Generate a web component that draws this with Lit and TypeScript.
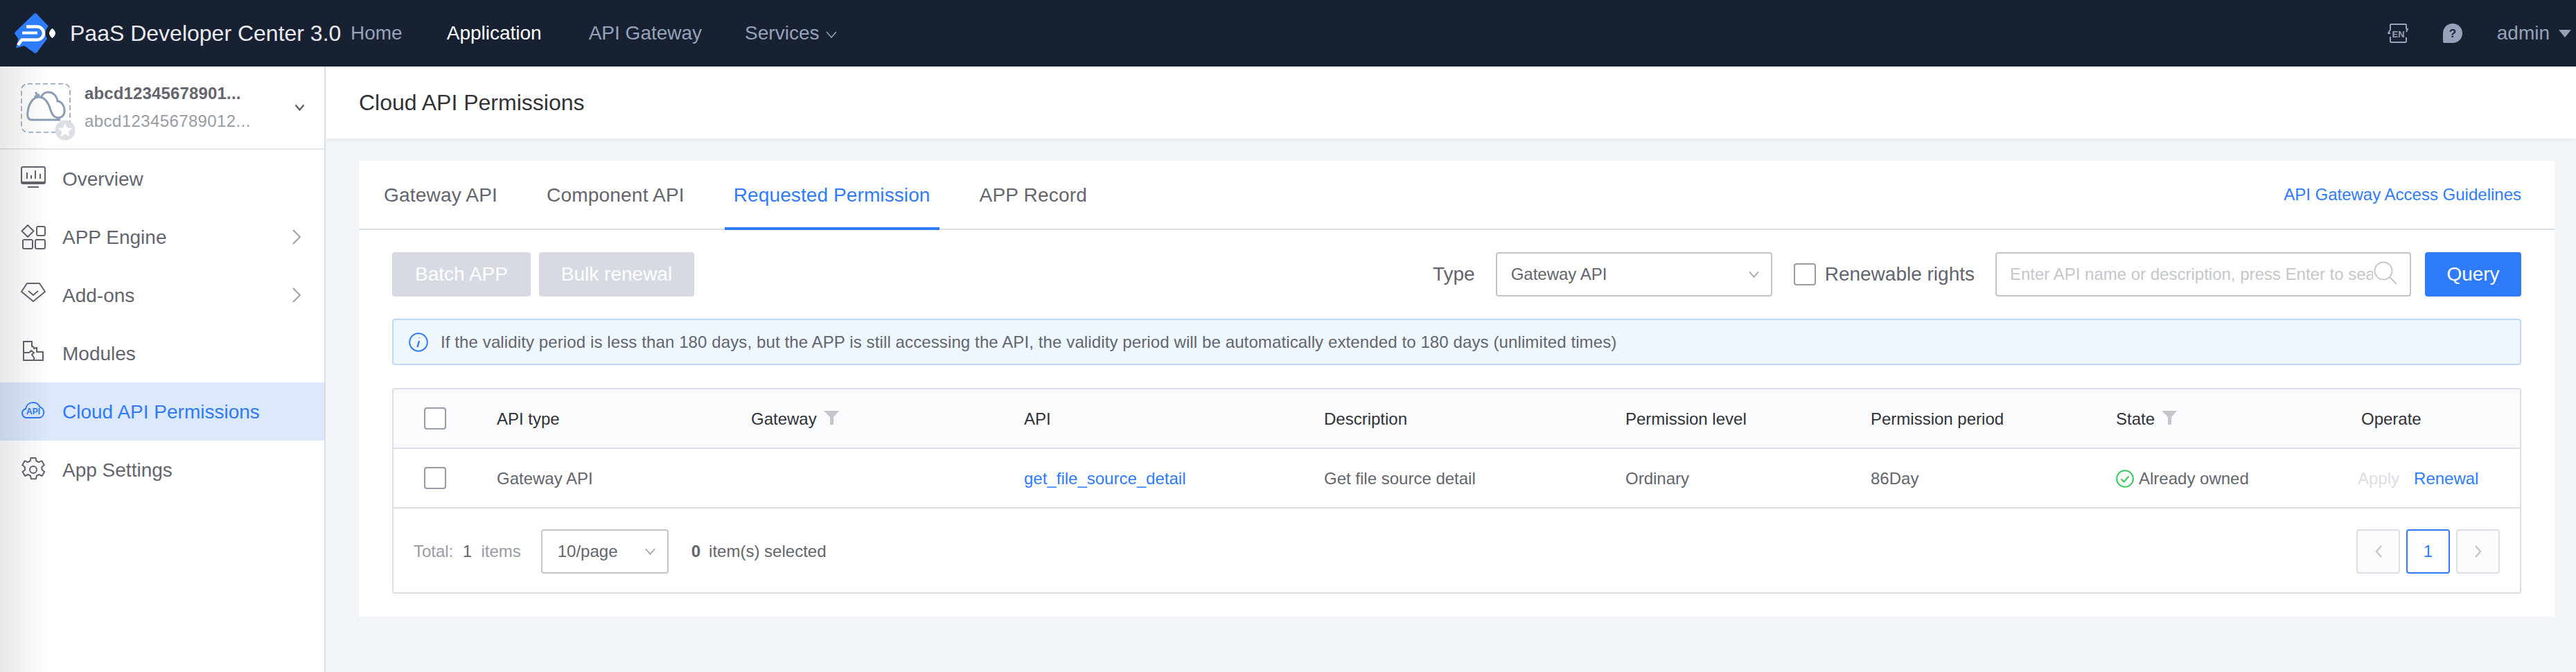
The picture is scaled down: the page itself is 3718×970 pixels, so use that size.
import { LitElement, html, css, svg } from "lit";
import { customElement } from "lit/decorators.js";

const chevronRight = html`<svg class="menu-chev" viewBox="0 0 12 22"><path d="M1 1l10 10L1 21" fill="none" stroke="#979ba5" stroke-width="1.8"/></svg>`;

const menuIcons: Record<string, unknown> = {
  overview: svg`<rect x="1" y="1" width="34" height="22" rx="2" fill="none" stroke="#63656e" stroke-width="2"/><path d="M1 20v3a2 2 0 002 2h30a2 2 0 002-2v-3" fill="none" stroke="#63656e" stroke-width="2"/><path d="M9 9v9M15 13v5M21 6v12M28 11v7M10 30h16" fill="none" stroke="#63656e" stroke-width="2"/>`,
  engine: svg`<path d="M10 1l8.500 8.500L10 18 1.500 9.500z" fill="none" stroke="#63656e" stroke-width="2" stroke-linejoin="round"/><rect x="23" y="3" width="12" height="13" rx="2" fill="none" stroke="#63656e" stroke-width="2"/><rect x="3" y="22" width="14" height="13" rx="2" fill="none" stroke="#63656e" stroke-width="2"/><rect x="21" y="22" width="14" height="13" rx="2" fill="none" stroke="#63656e" stroke-width="2"/>`,
  addons: svg`<path d="M9 1h18l8 12-17 14L1 13z" fill="none" stroke="#63656e" stroke-width="2" stroke-linejoin="round"/><path d="M11 12l7 6 7-6" fill="none" stroke="#63656e" stroke-width="2"/>`,
  modules: svg`<path d="M4 1h12v7a3 3 0 013 3l4-1v6h9v12H4z" fill="none" stroke="#63656e" stroke-width="2"/><path d="M4 17h8l3-3 4 3-3 3 3 4v5" fill="none" stroke="#63656e" stroke-width="2"/>`,
  api: svg`<path d="M9 27a6.500 6.500 0 01-2-12.800C8 9 12 5 18 5c5 0 8 3 9.500 6.500A8 8 0 0127 27z" fill="none" stroke="#2e7bfc" stroke-width="2"/><text x="18" y="22" text-anchor="middle" class="api-t">API</text>`,
  settings: svg`<path d="M14.500 1h7l1 4.500 3.500 1.700 4.300-2 3.500 6-3.600 3 .4 3.800 3.600 3-3.500 6-4.300-2-3.500 1.700-1 4.500h-7l-1-4.500-3.500-1.700-4.300 2-3.500-6 3.600-3-.4-3.800-3.600-3 3.500-6 4.300 2 3.500-1.700z" fill="none" stroke="#63656e" stroke-width="2" stroke-linejoin="round"/><circle cx="18" cy="18" r="5" fill="none" stroke="#63656e" stroke-width="2"/>`,
};

const funnel = html`<svg class="funnel" viewBox="0 0 22 20"><path d="M0 0h22l-8 9v11h-5V9z" fill="#c4c6cc"/></svg>`;
const smallChev = html`<svg class="sel-chev" viewBox="0 0 16 10"><path d="M1 1l7 8 7-8" fill="none" stroke="#979ba5" stroke-width="1.600"/></svg>`;

@customElement("app-root")
export class AppRoot extends LitElement {
  static styles = css`
    :host { display: block; font-family: "Liberation Sans", Arial, sans-serif; color: #63656e; width: 3718px; height: 970px; overflow: hidden; background: #f3f6f9; }
    .topbar { height: 96px; background: #182132; display: flex; align-items: center; }
    .logo { width: 64px; height: 62px; margin-left: 20px; flex: none; }
    .brand { margin-left: 17px; font-size: 32px; color: #eaebf0; white-space: nowrap; width: 405px; }
    .nav { display: flex; font-size: 28px; color: #96a2b9; }
    .nav span { display: flex; align-items: center; margin-right: 64px; }
    .nav .on { color: #fff; margin-right: 68px; }
    .nav .gw { margin-right: 62px; }
    .nav svg { width: 16px; height: 10px; margin-left: 10px; margin-top: 4px; }
    .top-right { margin-left: auto; display: flex; align-items: center; padding-right: 7px; color: #96a2b9; font-size: 28px; }
    .en { width: 30px; height: 28px; margin-right: 49px; }
    .help { width: 30px; height: 30px; margin-right: 49px; }
    .caret { width: 18px; height: 11px; margin-left: 13px; }
    .body { display: flex; height: 874px; }
    .side { width: 468px; border-right: 2px solid #dcdee5; background: #fff; position: relative; flex: none; }
    .side::before { content: ""; position: absolute; inset: 0 auto 0 0; width: 72px; background: linear-gradient(90deg, rgba(0,0,0,.09), rgba(0,0,0,0)); pointer-events: none; }
    .switch { height: 118px; border-bottom: 2px solid #e4e6ea; display: flex; align-items: center; padding-left: 30px; box-sizing: content-box; }
    .app-ic { width: 72px; height: 72px; flex: none; position: relative; margin-right: 20px; margin-top: 2px; }
    .app-ic svg { display: block; width: 100%; height: 100%; overflow: visible; }
    .app-txt { width: 303px; flex: none; }
    .a1 { font-size: 24px; font-weight: 700; color: #63656e; line-height: 28px; margin-bottom: 12px; white-space: nowrap; letter-spacing: .15px; }
    .a2 { font-size: 24px; color: #979ba5; line-height: 28px; white-space: nowrap; letter-spacing: .4px; }
    .sw-chev { width: 15px; height: 10px; }
    .item { height: 84px; display: flex; align-items: center; padding-left: 30px; font-size: 28px; color: #63656e; }
    .item span { padding-top: 2px; }
    .item .ic { width: 36px; height: 36px; margin-right: 24px; flex: none; overflow: visible; }
    .item.active { background: #dbe8fe; color: #2e7bfc; }
    .api-t { font: 700 12px "Liberation Sans", Arial, sans-serif; fill: #2e7bfc; }
    .menu-chev { width: 12px; height: 22px; margin-left: auto; margin-right: 34px; }
    .main { flex: 1; min-width: 0; }
    .head { height: 104px; background: #fff; display: flex; align-items: center; padding-left: 48px; font-size: 32px; color: #313238; box-shadow: 0 3px 6px rgba(0,0,0,.05); }
    .card { margin: 32px 31px 0 48px; height: 658px; background: #fff; display: flex; flex-direction: column; }
    .tabs { height: 100px; box-sizing: border-box; border-bottom: 2px solid #dcdee5; display: flex; align-items: stretch; padding: 0 48px 0 23px; }
    .tab { padding: 0 13px; margin-right: 45px; font-size: 28px; letter-spacing: .2px; display: flex; align-items: center; color: #63656e; white-space: nowrap; margin-bottom: -2px; border-top: 4px solid transparent; border-bottom: 4px solid transparent; box-sizing: border-box; }
    .tab.on { color: #2e7bfc; border-bottom-color: #2e7bfc; letter-spacing: .1px; }
    .guide { margin-left: auto; align-self: center; font-size: 24px; color: #2e7bfc; }
    .content { padding: 32px 48px 0; }
    .toolbar { display: flex; align-items: center; height: 64px; }
    .btn { height: 64px; border-radius: 4px; background: #d7dae2; color: #fff; font-size: 28px; display: flex; align-items: center; justify-content: center; }
    .b1 { width: 200px; margin-right: 12px; }
    .b2 { width: 224px; }
    .type { margin-left: auto; font-size: 28px; margin-right: 30px; }
    .select { border: 2px solid #c4c6cc; border-radius: 4px; background: #fff; height: 64px; box-sizing: border-box; display: flex; align-items: center; font-size: 24px; }
    .sel-chev { width: 15px; height: 10px; margin-left: auto; }
    .s1 { width: 399px; padding: 0 17px 0 20px; margin-right: 31px; }
    .cb { width: 32px; height: 32px; box-sizing: border-box; border: 2px solid #979ba5; border-radius: 4px; background: #fff; flex: none; }
    .renew { font-size: 28px; margin-left: 13px; margin-right: 30px; }
    .search { width: 600px; height: 64px; box-sizing: border-box; border: 2px solid #c4c6cc; border-radius: 4px; display: flex; align-items: center; padding-left: 19px; padding-right: 17px; margin-right: 20px; }
    .ph { font-size: 24px; color: #c4c6cc; white-space: nowrap; overflow: hidden; flex: 1; min-width: 0; }
    .search svg { width: 36px; height: 36px; flex: none; margin-top: -4px; }
    .query { width: 139px; height: 64px; border-radius: 4px; background: #2e7bfc; color: #fff; font-size: 28px; display: flex; align-items: center; justify-content: center; }
    .alert { margin-top: 32px; height: 67px; box-sizing: border-box; background: #eef6fe; border: 2px solid #c0d8f8; border-radius: 4px; display: flex; align-items: center; padding-left: 22px; font-size: 24px; letter-spacing: .11px; }
    .alert svg { width: 28px; height: 28px; margin-right: 18px; flex: none; }
    .table { margin-top: 33px; border: 2px solid #dcdee5; border-radius: 4px; font-size: 24px; height: 297px; box-sizing: border-box; }
    .row { display: grid; grid-template-columns: 149px 367px 394px 433px 435px 354px 354px 354px 1fr; height: 86px; box-sizing: border-box; border-bottom: 2px solid #dcdee5; align-items: center; }
    .row > div:not(.c0) { padding-top: 2px; }
    .row.th { background: #fafbfd; color: #313238; }
    .row .c0 { padding-left: 44px; }
    .row .cb { display: block; }
    .fcell { display: flex; align-items: center; }
    .funnel { width: 22px; height: 20px; margin-left: 10px; margin-top: -4px; }
    .link { color: #2e7bfc; }
    .state { display: flex; align-items: center; }
    .state svg { width: 26px; height: 26px; margin-right: 7px; }
    .op { display: flex; margin-left: -5px; white-space: nowrap; }
    .apply { color: #dcdee5; margin-right: 21px; }
    .foot { display: flex; align-items: center; height: 121px; box-sizing: border-box; padding: 2px 29px 0; }
    .total { color: #979ba5; white-space: pre; }
    .total b { font-weight: 400; color: #63656e; }
    .s2 { width: 184px; padding: 0 17px 0 22px; margin-left: 29px; margin-right: 33px; }
    .sel b { font-weight: 700; color: #63656e; margin-right: 12px; }
    .pager { margin-left: auto; display: flex; gap: 9px; }
    .pg { width: 63px; height: 64px; box-sizing: border-box; border: 2px solid #dcdee5; border-radius: 4px; background: #fafbfd; display: flex; align-items: center; justify-content: center; }
    .pg svg { width: 12px; height: 20px; }
    .pg.cur { background: #fff; border-color: #2e7bfc; color: #2e7bfc; }
  `;

  private renderTable() {
    return html`<div class="table">
      <div class="row th">
        <div class="c0"><span class="cb"></span></div>
        <div>API type</div>
        <div class="fcell">Gateway${funnel}</div>
        <div>API</div>
        <div>Description</div>
        <div>Permission level</div>
        <div>Permission period</div>
        <div class="fcell">State${funnel}</div>
        <div>Operate</div>
      </div>
      <div class="row">
        <div class="c0"><span class="cb"></span></div>
        <div>Gateway API</div>
        <div></div>
        <div class="link">get_file_source_detail</div>
        <div>Get file source detail</div>
        <div>Ordinary</div>
        <div>86Day</div>
        <div class="state">
          <svg viewBox="0 0 26 26"><circle cx="13" cy="13" r="11.800" fill="none" stroke="#2dcb56" stroke-width="2"/><path d="M7.500 13.500l4 4 7-8" fill="none" stroke="#2dcb56" stroke-width="2"/></svg>
          Already owned
        </div>
        <div class="op"><span class="apply">Apply</span><span class="link">Renewal</span></div>
      </div>
      <div class="foot">
        <span class="total">Total:  <b>1</b>  items</span>
        <div class="select s2">10/page${smallChev}</div>
        <span class="sel"><b>0</b>item(s) selected</span>
        <div class="pager">
          <div class="pg"><svg viewBox="0 0 12 20"><path d="M10 2L3 10l7 8" fill="none" stroke="#c4c6cc" stroke-width="2.500"/></svg></div>
          <div class="pg cur">1</div>
          <div class="pg"><svg viewBox="0 0 12 20"><path d="M2 2l7 8-7 8" fill="none" stroke="#c4c6cc" stroke-width="2.500"/></svg></div>
        </div>
      </div>
    </div>`;
  }

  render() {
    const items: [string, string, boolean, boolean][] = [
      ["overview", "Overview", false, false],
      ["engine", "APP Engine", true, false],
      ["addons", "Add-ons", true, false],
      ["modules", "Modules", false, false],
      ["api", "Cloud API Permissions", false, true],
      ["settings", "App Settings", false, false],
    ];
    return html`
      <div class="topbar">
        <svg class="logo" viewBox="20 14 64 62">
          <path d="M48.500 17.500a3.500 3.500 0 015 0L70 35a14 14 0 00-2 18L53.500 72.500a3.500 3.500 0 01-5 0L35 63 23 66.500 26.500 53 22.500 47.500a3.500 3.500 0 010-5z" fill="#2e7bfc"/>
          <path d="M75.500 38c2.500 2 4.500 4.500 4.500 7s-2 5-4.500 7c-2.500-2-4.500-4.500-4.500-7s2-5 4.500-7z" fill="#fff"/>
          <path d="M38 35.500h15.500a9 9 0 010 19H31.500L26 62" fill="none" stroke="#fff" stroke-width="4.500"/>
          <path d="M32 44.500h22" fill="none" stroke="#fff" stroke-width="4"/>
        </svg>
        <div class="brand">PaaS Developer Center 3.0</div>
        <div class="nav">
          <span>Home</span>
          <span class="on">Application</span>
          <span class="gw">API Gateway</span>
          <span>Services<svg viewBox="0 0 16 10"><path d="M1 1l7 8 7-8" fill="none" stroke="#96a2b9" stroke-width="1.500"/></svg></span>
        </div>
        <div class="top-right">
          <svg class="en" viewBox="0 0 30 28">
            <path d="M4 9V2a1 1 0 011-1h21a1 1 0 011 1v6M27 20v6a1 1 0 01-1 1H5a1 1 0 01-1-1v-7" fill="none" stroke="#96a2b9" stroke-width="2"/>
            <path d="M4 9l-3 5h3M27 8l2 0-2 4" fill="none" stroke="#96a2b9" stroke-width="2"/>
            <text x="15.500" y="19.500" text-anchor="middle" font-size="13" font-weight="700" fill="#96a2b9">EN</text>
          </svg>
          <svg class="help" viewBox="0 0 30 30">
            <path d="M15 1a14 14 0 010 28H3a2 2 0 01-2-2V15A14 14 0 0115 1z" fill="#96a2b9"/>
            <text x="15" y="21" text-anchor="middle" font-size="17" font-weight="700" fill="#182132">?</text>
          </svg>
          <span>admin</span>
          <svg class="caret" viewBox="0 0 18 11"><path d="M0 0h18L9 11z" fill="#96a2b9"/></svg>
        </div>
      </div>
      <div class="body">
        <aside class="side">
          <div class="switch">
            <div class="app-ic">
              <svg viewBox="0 0 72 72">
                <rect x="1" y="1" width="70" height="70" rx="9" fill="none" stroke="#8c9db3" stroke-width="1.600" stroke-dasharray="7 4"/>
                <path d="M16 53C10 53 9 47 10 42 11 30 18 20 26 20 34 20 38 26 41 33 44 42 46 50 54 50 60 50 64 45 63 38 62 31 58 26 53 26 52 18 46 13 40 13 36 13 32 15 30 19M16 53H56M22 14C23 17 25 19 27 20M21 19l5-2" fill="none" stroke="#8c9db3" stroke-width="3" stroke-linecap="round"/>
                <circle cx="64" cy="68" r="14.500" fill="#dcdee5"/>
                <path d="M64 58l3 6.500 7 .8-5.200 4.700 1.400 7L64 73.500 57.800 77l1.400-7-5.200-4.700 7-.8z" fill="#fff"/>
              </svg>
            </div>
            <div class="app-txt">
              <div class="a1">abcd12345678901...</div>
              <div class="a2">abcd123456789012...</div>
            </div>
            <svg class="sw-chev" viewBox="0 0 15 10"><path d="M1.500 1.500l6 7 6-7" fill="none" stroke="#63656e" stroke-width="2.600"/></svg>
          </div>
          ${items.map(([ic, label, chev, active]) => html`
            <div class="item ${active ? "active" : ""}">
              <svg class="ic" viewBox="0 0 36 36">${menuIcons[ic]}</svg>
              <span>${label}</span>
              ${chev ? chevronRight : ""}
            </div>`)}
        </aside>
        <main class="main">
          <div class="head">Cloud API Permissions</div>
          <section class="card">
            <div class="tabs">
              <div class="tab">Gateway API</div>
              <div class="tab">Component API</div>
              <div class="tab on">Requested Permission</div>
              <div class="tab">APP Record</div>
              <div class="guide">API Gateway Access Guidelines</div>
            </div>
            <div class="content">
              <div class="toolbar">
                <div class="btn b1">Batch APP</div>
                <div class="btn b2">Bulk renewal</div>
                <span class="type">Type</span>
                <div class="select s1">Gateway API${smallChev}</div>
                <span class="cb"></span>
                <span class="renew">Renewable rights</span>
                <div class="search">
                  <span class="ph">Enter API name or description, press Enter to search</span>
                  <svg viewBox="0 0 36 36"><circle cx="15" cy="15" r="12.500" fill="none" stroke="#c4c6cc" stroke-width="2"/><path d="M24 24l10 10" fill="none" stroke="#c4c6cc" stroke-width="2"/></svg>
                </div>
                <div class="query">Query</div>
              </div>
              <div class="alert">
                <svg viewBox="0 0 28 28"><circle cx="14" cy="14" r="12.800" fill="none" stroke="#2e7bfc" stroke-width="2"/><path d="M15.500 7.500v.5M15 12l-2.500 9" fill="none" stroke="#2e7bfc" stroke-width="2.400"/></svg>
                If the validity period is less than 180 days, but the APP is still accessing the API, the validity period will be automatically extended to 180 days (unlimited times)
              </div>
              ${this.renderTable()}
            </div>
          </section>
        </main>
      </div>
    `;
  }
}
